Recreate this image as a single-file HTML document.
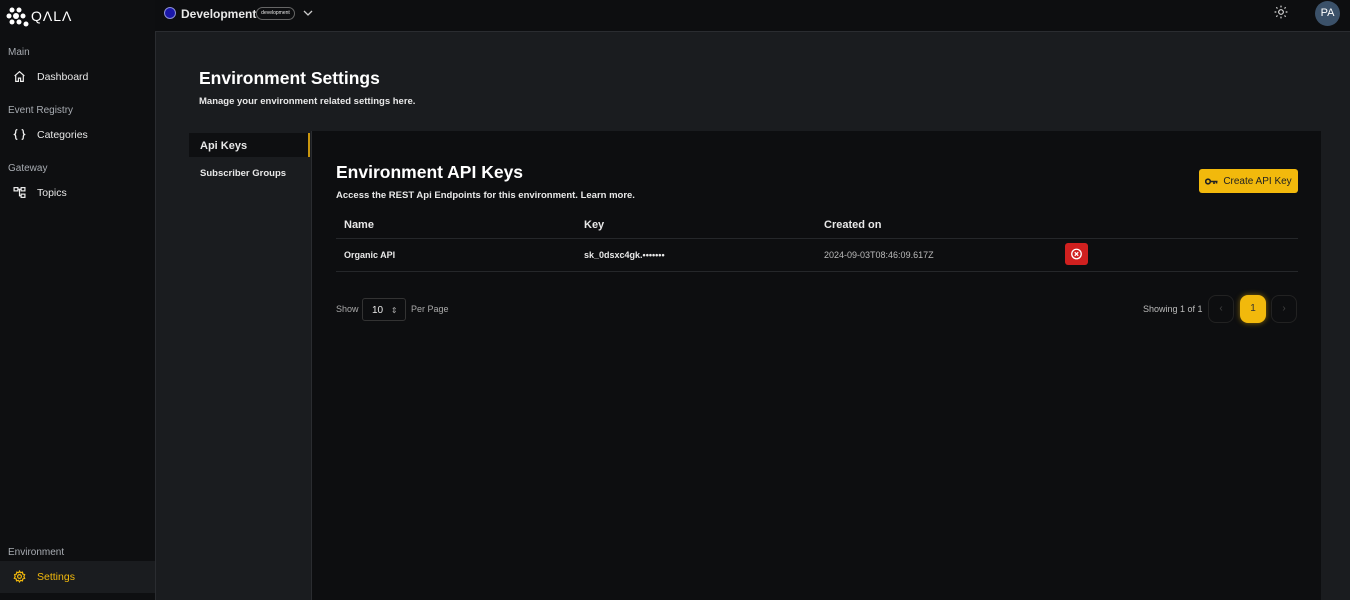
<!DOCTYPE html>
<html><head><meta charset="utf-8"><style>
*{box-sizing:border-box;margin:0;padding:0}
body{width:1350px;height:600px;overflow:hidden;background:#0d0e10;font-family:"Liberation Sans",sans-serif;color:#e8e8e8;position:relative}
.abs{position:absolute}
.side{left:0;top:0;width:155px;height:600px;background:#0e0f11}
.main{left:155px;top:31px;width:1195px;height:569px;background:#1a1c1f;border-left:1px solid #2a2c30;border-top:1px solid #2a2c30}
.lbl{font-size:10px;color:#a8acb2;left:8px}
.nav{left:13px;font-size:10.5px;color:#e8e8e8;display:flex;align-items:center;gap:11px}
.panel{left:186px;top:131px;width:1135px;height:469px;background:#0d0e10}
.tabs{left:186px;top:131px;width:126px;height:469px;background:#1a1c1f;border-right:1px solid #2a2c30}
b{font-weight:700}
</style></head><body>
<div class="abs side"></div>
<div class="abs main"></div>
<svg class="abs" style="left:6px;top:7px" width="24" height="21" viewBox="0 0 24 21"><g fill="#fff"><circle cx="6" cy="3" r="2.5"/><circle cx="13" cy="3" r="2.5"/><circle cx="3" cy="9" r="2.5"/><circle cx="10" cy="9" r="3"/><circle cx="17" cy="9" r="2.5"/><circle cx="6" cy="15" r="2.5"/><circle cx="13" cy="15" r="2.5"/><circle cx="20" cy="17" r="2.5"/></g></svg>
<div class="abs" style="left:31px;top:8px;font-size:14px;letter-spacing:1px;color:#fff">QΛLΛ</div>
<div class="abs lbl" style="top:47px">Main</div>
<div class="abs nav" style="top:70px"><svg width="13" height="13" viewBox="0 0 24 24" fill="none" stroke="#eee" stroke-width="2.2"><path d="M3 11l9-8 9 8M5 9v12h5v-6h4v6h5V9"/></svg><span>Dashboard</span></div>
<div class="abs lbl" style="top:105px">Event Registry</div>
<div class="abs nav" style="top:128px"><svg width="13" height="13" viewBox="0 0 24 24" fill="none" stroke="#eee" stroke-width="2.4"><path d="M8 3c-3 0-3 2-3 4s0 4-2 5c2 1 2 3 2 5s0 4 3 4M16 3c3 0 3 2 3 4s0 4 2 5c-2 1-2 3-2 5s0 4-3 4"/></svg><span>Categories</span></div>
<div class="abs lbl" style="top:163px">Gateway</div>
<div class="abs nav" style="top:186px"><svg width="13" height="13" viewBox="0 0 24 24" fill="none" stroke="#eee" stroke-width="2.2"><rect x="2" y="3" width="7" height="6"/><rect x="15" y="3" width="7" height="6"/><rect x="15" y="15" width="7" height="6"/><path d="M9 6h6M12 6v12h3"/></svg><span>Topics</span></div>
<div class="abs lbl" style="top:547px">Environment</div>
<div class="abs" style="left:0;top:561px;width:155px;height:32px;background:#1a1c1f"></div>
<div class="abs nav" style="top:570px;color:#f2b90c"><svg width="13" height="13" viewBox="0 0 24 24" fill="none" stroke="#f2b90c" stroke-width="2.2"><circle cx="12" cy="12" r="3.5"/><path d="M12 2l2 3 3.5-1 .5 3.5 3.5 1-1.5 3.5 1.5 3.5-3.5 1-.5 3.5-3.5-1-2 3-2-3-3.5 1-.5-3.5-3.5-1 1.5-3.5L3 8.5l3.5-1L7 4l3.5 1z"/></svg><span>Settings</span></div>
<!-- top bar -->
<div class="abs" style="left:164px;top:7px;width:12px;height:12px;border-radius:50%;background:#1a17a8;border:1.5px solid #8b8fd6"></div>
<div class="abs" style="left:181px;top:7px;font-size:12px;font-weight:700">Development</div>
<div class="abs" style="left:256px;top:7px;width:39px;height:13px;border:1px solid #666;border-radius:7px;font-size:5px;text-align:center;line-height:11px">development</div>
<svg class="abs" style="left:303px;top:9px" width="10" height="8" viewBox="0 0 10 8"><path d="M1 2l4 4 4-4" fill="none" stroke="#ccc" stroke-width="1.3"/></svg>
<svg class="abs" style="left:1274px;top:5px" width="14" height="14" viewBox="0 0 24 24" fill="none" stroke="#ddd" stroke-width="2"><circle cx="12" cy="12" r="4"/><path d="M12 1v3M12 20v3M1 12h3M20 12h3M4 4l2 2M18 18l2 2M4 20l2-2M18 6l2-2"/></svg>
<div class="abs" style="left:1315px;top:1px;width:25px;height:25px;border-radius:50%;background:#3b5169;font-size:11px;text-align:center;line-height:25px;color:#fff">PA</div>
<div class="abs" style="left:199px;top:68px;font-size:17.5px;font-weight:700;color:#fff">Environment Settings</div>
<div class="abs" style="left:199px;top:96px;font-size:9.5px;font-weight:700">Manage your environment related settings here.</div>
<div class="abs panel"></div>
<div class="abs tabs"></div>
<div class="abs" style="left:189px;top:133px;width:121px;height:24px;background:#0e0f11;border-right:2px solid #c9960e"></div>
<div class="abs" style="left:200px;top:140px;font-size:11px;font-weight:700">Api Keys</div>
<div class="abs" style="left:200px;top:168px;font-size:9.5px;font-weight:700">Subscriber Groups</div>
<div class="abs" style="left:336px;top:162px;font-size:17.5px;font-weight:700;color:#fff">Environment API Keys</div>
<div class="abs" style="left:336px;top:190px;font-size:9.5px;font-weight:700">Access the REST Api Endpoints for this environment. Learn more.</div>
<div class="abs" style="left:1199px;top:169px;width:99px;height:24px;background:#f2b90c;border-radius:3px;color:#222;font-size:10px;display:flex;align-items:center;justify-content:center;gap:5px"><svg width="13" height="7" viewBox="0 0 13 7"><circle cx="3" cy="3.5" r="2.3" fill="none" stroke="#222" stroke-width="1.6"/><path d="M5 3.5h7.5M9 3.5v2.5M11.5 3.5v2" stroke="#222" stroke-width="1.6"/></svg>Create API Key</div>
<div class="abs" style="left:344px;top:219px;font-size:11px;font-weight:700">Name</div>
<div class="abs" style="left:584px;top:219px;font-size:11px;font-weight:700">Key</div>
<div class="abs" style="left:824px;top:219px;font-size:11px;font-weight:700">Created on</div>
<div class="abs" style="left:336px;top:238px;width:962px;height:1px;background:#25272a"></div>
<div class="abs" style="left:344px;top:250px;font-size:9px;font-weight:700">Organic API</div>
<div class="abs" style="left:584px;top:250px;font-size:9px;font-weight:700">sk_0dsxc4gk.•••••••</div>
<div class="abs" style="left:824px;top:250px;font-size:9px;color:#bbb">2024-09-03T08:46:09.617Z</div>
<div class="abs" style="left:1065px;top:243px;width:23px;height:22px;background:#d0201f;border-radius:3px"><svg style="position:absolute;left:5px;top:5px" width="13" height="12" viewBox="0 0 24 24" fill="none" stroke="#fff" stroke-width="2.6"><circle cx="12" cy="12" r="9.5"/><path d="M8.5 8.5l7 7M15.5 8.5l-7 7"/></svg></div>
<div class="abs" style="left:336px;top:271px;width:962px;height:1px;background:#25272a"></div>
<div class="abs" style="left:336px;top:304px;font-size:9px;color:#aaa">Show</div>
<div class="abs" style="left:362px;top:298px;width:44px;height:23px;border:1px solid #333;border-radius:3px;font-size:10px;padding:6px 0 0 9px">10 <span style="font-size:8px;color:#aaa;margin-left:5px">⇕</span></div>
<div class="abs" style="left:411px;top:304px;font-size:9px;color:#aaa">Per Page</div>
<div class="abs" style="left:1143px;top:304px;font-size:9px;color:#bbb">Showing 1 of 1</div>
<div class="abs" style="left:1208px;top:295px;width:26px;height:28px;border:1px solid #222;border-radius:8px;color:#444;font-size:10px;text-align:center;line-height:26px">‹</div>
<div class="abs" style="left:1240px;top:295px;width:26px;height:28px;background:#f2b90c;border-radius:8px;color:#333;font-size:10px;text-align:center;line-height:28px;box-shadow:0 0 6px #8a6a08">1</div>
<div class="abs" style="left:1271px;top:295px;width:26px;height:28px;border:1px solid #222;border-radius:8px;color:#444;font-size:10px;text-align:center;line-height:26px">›</div>
</body></html>
